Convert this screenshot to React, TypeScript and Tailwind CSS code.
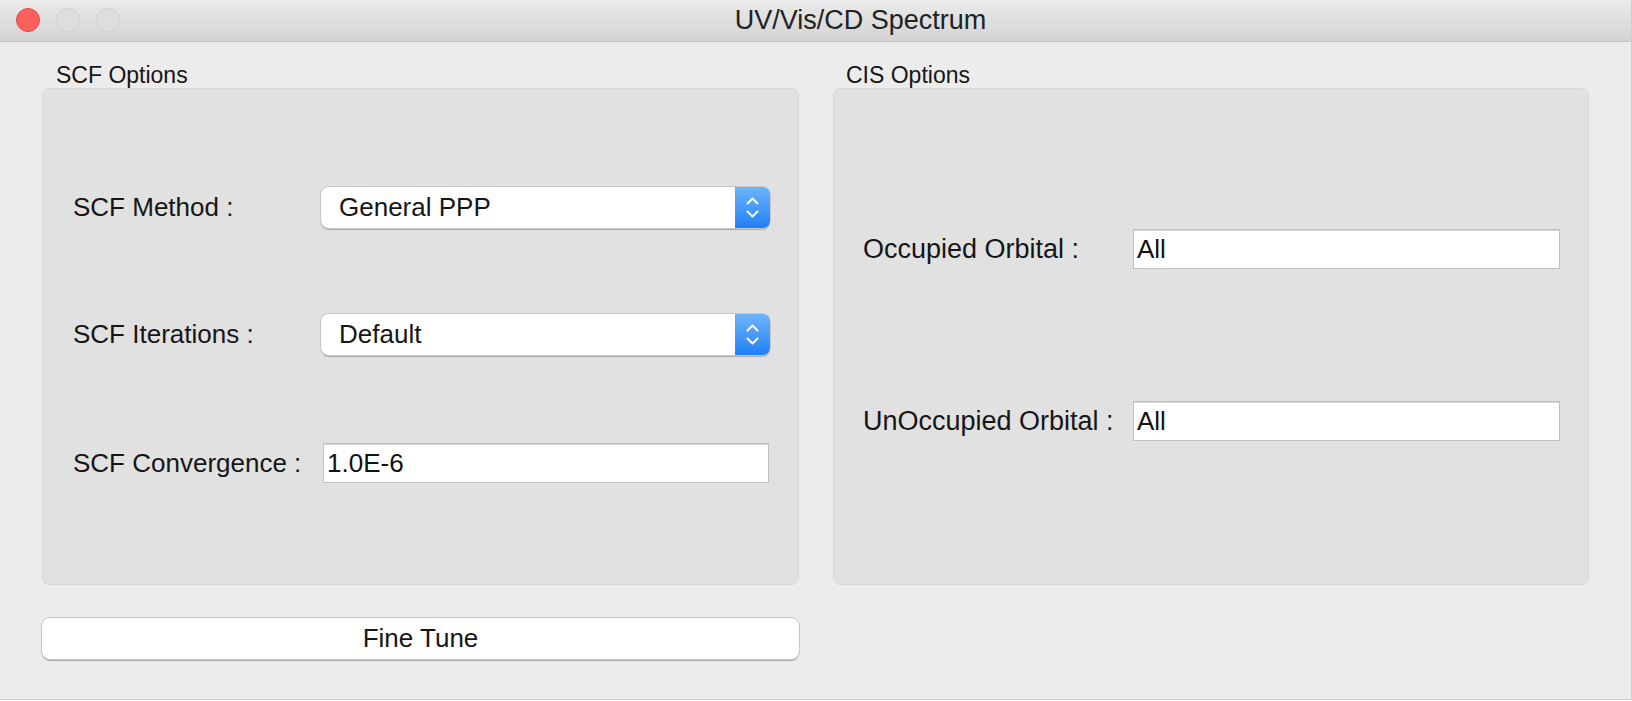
import React from "react";

const font = { fontFamily: '"Liberation Sans", Arial, Helvetica, sans-serif' };

function Stepper() {
  return (
    <div className="flex h-full w-[35px] flex-col items-center justify-center gap-[5px] rounded-r-[7px] bg-gradient-to-b from-[#6cb4fb] to-[#1d7ff7]">
      <svg width="13" height="8" viewBox="0 0 13 8" fill="none">
        <path d="M1.5 6.5 L6.5 1.5 L11.5 6.5" stroke="white" strokeWidth="2" strokeLinecap="round" strokeLinejoin="round" />
      </svg>
      <svg width="13" height="8" viewBox="0 0 13 8" fill="none">
        <path d="M1.5 1.5 L6.5 6.5 L11.5 1.5" stroke="white" strokeWidth="2" strokeLinecap="round" strokeLinejoin="round" />
      </svg>
    </div>
  );
}

function Select({ value }: { value: string }) {
  return (
    <div className="flex h-[41px] w-[449px] items-stretch rounded-[8px] bg-white shadow-[0_0_0_1px_#c6c6c6,0_1.5px_1px_#a9a9a9]">
      <div className="flex flex-1 items-center pl-[18px] text-[26px] text-[#161616]">{value}</div>
      <Stepper />
    </div>
  );
}

function TextInput({ value, w }: { value: string; w: string }) {
  return (
    <div className={`flex h-[40px] ${w} items-center border border-[#c0c0c0] bg-white pl-[3px] text-[26px] text-[#111] shadow-[inset_0_1px_0_#d6d6d6]`}>
      {value}
    </div>
  );
}

export default function App() {
  return (
    <div style={font} className="h-[701px] w-[1632px] overflow-hidden bg-white">
      <div className="flex h-[700px] w-[1632px] flex-col border-b border-r border-[#cfcfcf] bg-[#ececec]">
        {/* title bar */}
        <div className="relative flex h-[42px] shrink-0 items-center justify-center border-b border-[#c6c6c6] bg-gradient-to-b from-[#ebebeb] to-[#d3d3d3] pl-[90px]">
          <div className="absolute left-[16px] top-[8px] flex gap-[16px]">
            <div className="h-[24px] w-[24px] rounded-full border border-[#e24b47] bg-[#fc615d]" />
            <div className="h-[24px] w-[24px] rounded-full border border-[#d2d2d2] bg-[#dedede]" />
            <div className="h-[24px] w-[24px] rounded-full border border-[#d2d2d2] bg-[#dedede]" />
          </div>
          <span className="text-[27px] leading-none text-[#222]">UV/Vis/CD Spectrum</span>
        </div>

        {/* content */}
        <div className="flex gap-[34px] px-[42px]">
          {/* left column */}
          <div className="flex w-[757px] flex-col">
            <div className="flex h-[46px] items-end pl-[14px] text-[23px] leading-[26px] text-[#161616]">SCF Options</div>
            <div className="flex h-[497px] flex-col rounded-[7px] border border-[#d9d9d9] bg-[#e1e1e1] pl-[30px] pt-[98px]">
              <div className="flex h-[41px] items-center">
                <div className="w-[248px] text-[26px] text-[#161616]">SCF Method :</div>
                <Select value="General PPP" />
              </div>
              <div className="mt-[86px] flex h-[41px] items-center">
                <div className="w-[248px] text-[26px] text-[#161616]">SCF Iterations :</div>
                <Select value="Default" />
              </div>
              <div className="mt-[88px] flex h-[40px] items-center">
                <div className="w-[250px] text-[26px] text-[#161616]">SCF Convergence :</div>
                <TextInput value="1.0E-6" w="w-[446px]" />
              </div>
            </div>
            <button className="mt-[33px] flex h-[41px] w-[757px] items-center justify-center rounded-[8px] bg-white text-[26px] text-[#161616] shadow-[0_0_0_1px_#c6c6c6,0_1.5px_1px_#a9a9a9]">
              Fine Tune
            </button>
          </div>

          {/* right column */}
          <div className="flex w-[757px] flex-col">
            <div className="flex h-[46px] items-end pl-[13px] text-[23px] leading-[26px] text-[#161616]">CIS Options</div>
            <div className="flex h-[497px] flex-col rounded-[7px] border border-[#d9d9d9] bg-[#e1e1e1] pl-[29px] pt-[140px]">
              <div className="flex h-[40px] items-center">
                <div className="w-[270px] text-[27px] text-[#161616]">Occupied Orbital :</div>
                <TextInput value="All" w="w-[427px]" />
              </div>
              <div className="mt-[132px] flex h-[40px] items-center">
                <div className="w-[270px] text-[27px] text-[#161616]">UnOccupied Orbital :</div>
                <TextInput value="All" w="w-[427px]" />
              </div>
            </div>
          </div>
        </div>
      </div>
    </div>
  );
}
